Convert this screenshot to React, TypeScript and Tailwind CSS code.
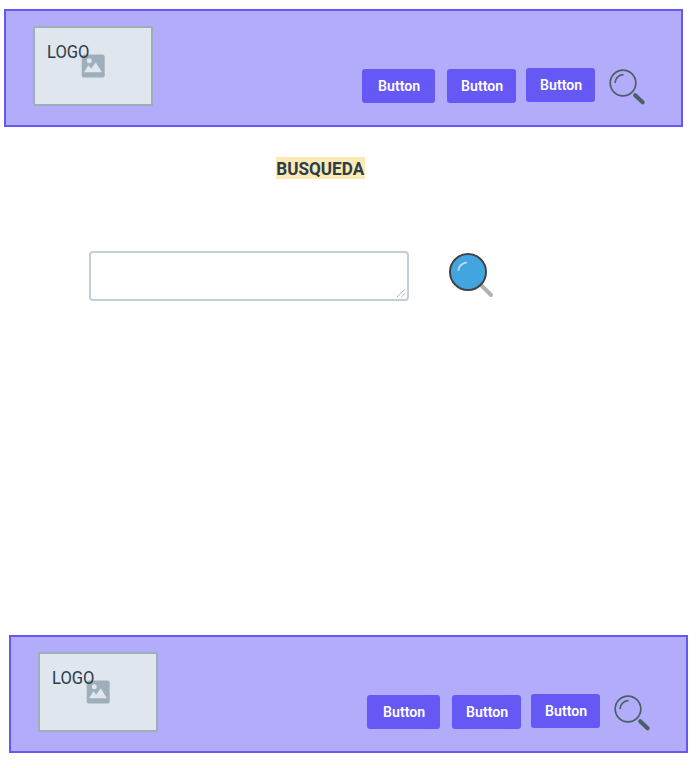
function ImageGlyph() {
  return (
    <svg className="block size-6" viewBox="0 0 24 24">
      <rect x="0.7" y="0.6" width="23" height="23" rx="2.6" fill="#9eaebb" />
      <circle cx="8.3" cy="6.8" r="2.5" fill="#dfe6ee" />
      <path d="M3 18.2 7.3 11.3 10.2 14.6 14.8 8.4 21 18.2Z" fill="#dfe6ee" />
    </svg>
  );
}

function OutlineLens() {
  return (
    <svg className="block h-[38px] w-[38px]" viewBox="0 0 38 38" fill="none" stroke="#4a6069">
      <circle cx="15" cy="15" r="12.8" strokeWidth="1.7" />
      <path d="M7 15a8.4 8.4 0 0 1 8.5-8.3" strokeWidth="1.7" />
      <path d="M27.2 27.3 34.6 34.3" strokeWidth="4.2" strokeLinecap="round" />
    </svg>
  );
}

function NavButton({ className }: { className: string }) {
  return (
    <button
      className={`flex h-[34px] items-center justify-center rounded-[3px] bg-[#6658f5] pt-0.5 pl-px text-[15.5px] leading-none font-semibold text-white ${className}`}
    >
      <span className="inline-block origin-center scale-x-[0.91]">Button</span>
    </button>
  );
}

function Bar({ className }: { className: string }) {
  return (
    <div
      className={`flex h-[118px] w-[679px] items-start border-2 border-[#6658f5] bg-[#b2acfa] ${className}`}
    >
      <div className="relative mt-[15px] ml-[27px] flex h-20 w-[120px] items-center justify-center border-2 border-[#9eaebb] bg-[#dfe6ee]">
        <ImageGlyph />
        <span className="absolute top-[13px] left-3 origin-left scale-x-[0.92] text-[18px] leading-[22px] text-[#2c3c48]">
          LOGO
        </span>
      </div>
      <NavButton className="mt-[58px] ml-[209px] w-[73px]" />
      <NavButton className="mt-[58px] ml-3 w-[69px]" />
      <NavButton className="mt-[57px] ml-2.5 w-[69px]" />
      <div className="mt-[57px] ml-[13px]">
        <OutlineLens />
      </div>
    </div>
  );
}

export default function App() {
  return (
    <div className="flex h-[768px] w-[697px] flex-col overflow-hidden bg-white font-[Roboto,'Liberation_Sans',sans-serif]">
      <Bar className="mt-[9px] ml-1" />
      <h1 className="mt-[30px] ml-[276px] flex h-[22px] w-[89px] items-center justify-center bg-[#fce9b5] pt-0.5 text-[18px] leading-[22px] font-bold text-[#2c3c48]">
        <span className="inline-block scale-x-[0.95]">BUSQUEDA</span>
      </h1>
      <div className="mt-[72px] ml-[89px] flex h-[50px] items-start">
        <div className="flex h-[50px] w-80 items-end justify-end rounded-[4px] border-2 border-[#c3ced9]">
          <svg className="block h-3 w-3" viewBox="0 0 12 12" fill="none" stroke="#a9b5c1">
            <path d="M2 10 10.2 2M6.2 10 10.2 6.2" />
          </svg>
        </div>
        <svg className="ml-[39px] block h-[50px] w-[50px]" viewBox="0 0 50 50" fill="none">
          <path d="M32.5 33.5 43 44" stroke="#b2b2b1" strokeWidth="4" strokeLinecap="round" />
          <circle cx="20" cy="21" r="18" fill="#42a5df" stroke="#414347" strokeWidth="2" />
          <path d="M10.2 19.6a9.6 9.6 0 0 1 8.5-8.2" stroke="#b9def5" strokeWidth="2" />
        </svg>
      </div>
      <Bar className="mt-[334px] ml-[9px]" />
    </div>
  );
}
